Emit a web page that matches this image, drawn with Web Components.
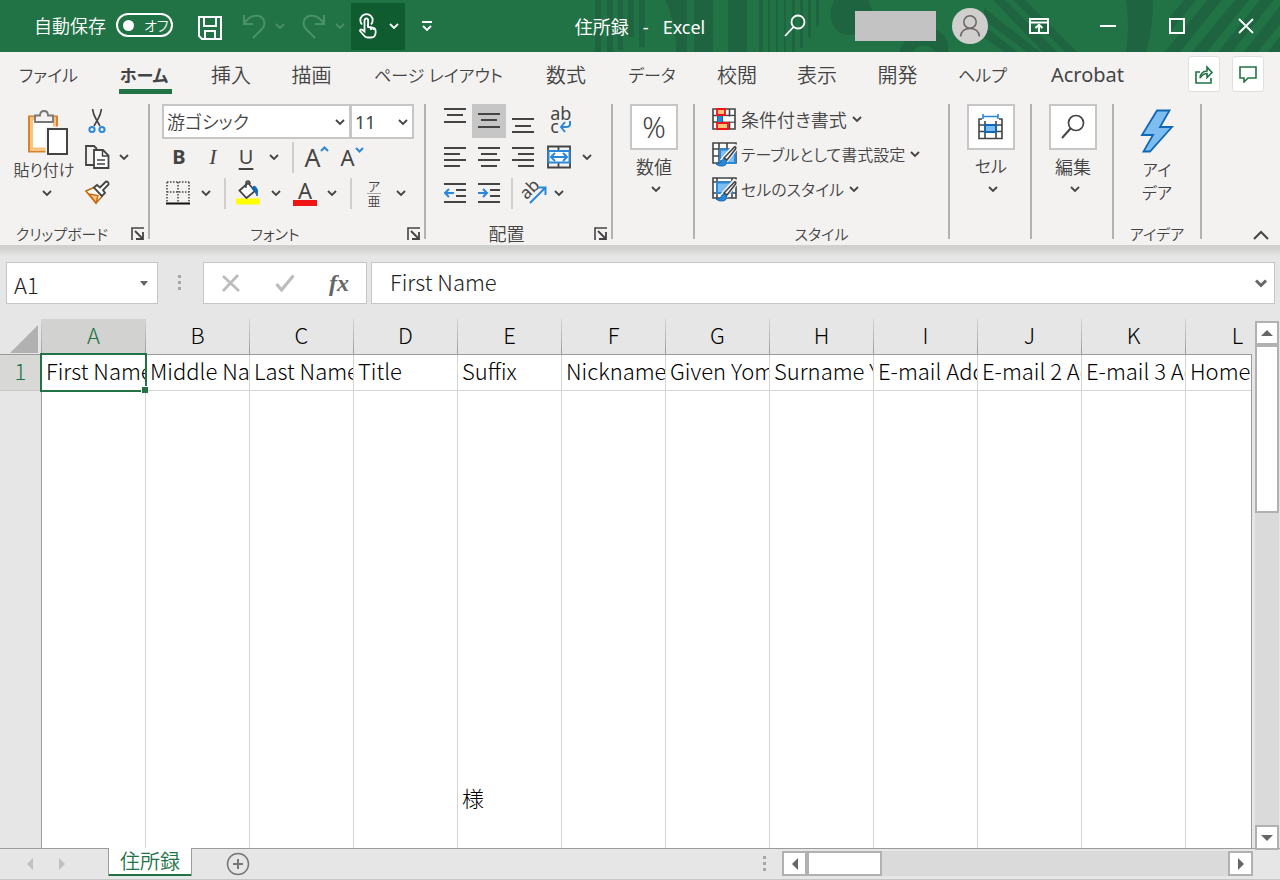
<!DOCTYPE html>
<html lang="ja">
<head>
<meta charset="utf-8">
<title>住所録 - Excel</title>
<style>
  html, body { margin: 0; height: 100%; }
  body {
    display: flex; flex-direction: column; min-height: 100vh; overflow: hidden;
    background: #e6e6e6; color: #444;
    font-family: "Noto Sans", "Noto Sans CJK JP", sans-serif; font-size: 18px; font-weight: 350;
    font-feature-settings: "palt";
    --green: #217346; --line: #9b9b9b; --sep: #b1b1b1; --ink: #444;
  }
  xl-sheet { flex: 1; min-height: 0; }
</style>
</head>
<body>
<xl-titlebar></xl-titlebar>
<xl-tabs></xl-tabs>
<xl-ribbon>
  <xl-group label="クリップボード" launcher style="--w:150px">
    <div slot="body" class="clip">
      <xl-tall icon="paste" label="貼り付け"></xl-tall>
      <xl-row>
        <xl-cmd icon="cut" label="切り取り" style="--w:30px"></xl-cmd>
      </xl-row>
      <xl-row>
        <xl-cmd icon="copy" label="コピー" style="--w:30px"></xl-cmd><xl-cmd icon="chev" label="コピーのオプション" style="--w:24px"></xl-cmd>
      </xl-row>
      <xl-row>
        <xl-cmd icon="brush" label="書式のコピー" style="--w:30px"></xl-cmd>
      </xl-row>
    </div>
  </xl-group>
  <xl-group label="フォント" launcher style="--w:276px;--pad:12px">
    <xl-row slot="body">
      <xl-combo value="游ゴシック" label="フォント名" style="--w:189px"></xl-combo><xl-combo value="11" label="フォント サイズ" style="--w:64px"></xl-combo>
    </xl-row>
    <xl-row slot="body">
      <xl-cmd icon="bold" label="太字" style="--w:34px"></xl-cmd>
      <xl-cmd icon="italic" label="斜体" style="--w:34px"></xl-cmd>
      <xl-cmd icon="underline" label="下線" style="--w:32px"></xl-cmd>
      <xl-cmd icon="chev" label="下線の種類" style="--w:24px"></xl-cmd>
      <xl-sep style="--w:14px"></xl-sep>
      <xl-cmd icon="grow" label="フォント サイズの拡大" style="--w:34px"></xl-cmd>
      <xl-cmd icon="shrink" label="フォント サイズの縮小" style="--w:36px"></xl-cmd>
    </xl-row>
    <xl-row slot="body">
      <xl-cmd icon="borders" label="罫線" style="--w:32px"></xl-cmd>
      <xl-cmd icon="chev" label="罫線の種類" style="--w:24px"></xl-cmd>
      <xl-sep style="--w:14px"></xl-sep>
      <xl-cmd icon="fill" label="塗りつぶしの色" style="--w:32px"></xl-cmd>
      <xl-cmd icon="chev" label="色の選択" style="--w:24px"></xl-cmd>
      <xl-cmd icon="fontcolor" label="フォントの色" style="--w:34px"></xl-cmd>
      <xl-cmd icon="chev" label="文字色の選択" style="--w:20px"></xl-cmd>
      <xl-sep style="--w:18px"></xl-sep>
      <xl-cmd icon="ruby" label="ふりがな" style="--w:28px"></xl-cmd>
      <xl-cmd icon="chev" label="ふりがなの設定" style="--w:26px"></xl-cmd>
    </xl-row>
  </xl-group>
  <xl-group label="配置" launcher style="--w:187px;--pad:12px">
    <xl-row slot="body">
      <xl-cmd icon="vtop" label="上揃え" style="--w:34px"></xl-cmd>
      <xl-cmd icon="vmid" label="上下中央揃え" pressed style="--w:34px"></xl-cmd>
      <xl-cmd icon="vbot" label="下揃え" style="--w:34px"></xl-cmd>
      <xl-cmd icon="wrap" label="折り返して全体を表示" style="--w:42px"></xl-cmd>
    </xl-row>
    <xl-row slot="body">
      <xl-cmd icon="left" label="左揃え" style="--w:34px"></xl-cmd>
      <xl-cmd icon="center" label="中央揃え" style="--w:34px"></xl-cmd>
      <xl-cmd icon="right" label="右揃え" style="--w:34px"></xl-cmd>
      <xl-cmd icon="merge" label="セルを結合して中央揃え" style="--w:38px"></xl-cmd>
      <xl-cmd icon="chev" label="結合のオプション" style="--w:18px"></xl-cmd>
    </xl-row>
    <xl-row slot="body">
      <xl-cmd icon="outdent" label="インデントを減らす" style="--w:34px"></xl-cmd>
      <xl-cmd icon="indent" label="インデントを増やす" style="--w:34px"></xl-cmd>
      <xl-sep style="--w:12px"></xl-sep>
      <xl-cmd icon="orient" label="方向" style="--w:32px"></xl-cmd>
      <xl-cmd icon="chev" label="方向の設定" style="--w:18px"></xl-cmd>
    </xl-row>
  </xl-group>
  <xl-group style="--w:82px"><xl-box slot="body" icon="percent" label="数値"></xl-box></xl-group>
  <xl-group label="スタイル" style="--w:255px;--pad:17px">
    <xl-line slot="body" icon="condfmt" label="条件付き書式"></xl-line>
    <xl-line slot="body" icon="tablefmt" label="テーブルとして書式設定"></xl-line>
    <xl-line slot="body" icon="cellstyle" label="セルのスタイル"></xl-line>
  </xl-group>
  <xl-group style="--w:82px"><xl-box slot="body" icon="cells" label="セル"></xl-box></xl-group>
  <xl-group style="--w:82px"><xl-box slot="body" icon="find" label="編集"></xl-box></xl-group>
  <xl-group label="アイデア" style="--w:88px"><xl-idea slot="body"></xl-idea></xl-group>
</xl-ribbon>
<xl-formula></xl-formula>
<xl-sheet></xl-sheet>
<xl-footer></xl-footer>

<script>
const S = (w, h, body) => `<svg width="${w}" height="${h}" viewBox="0 0 ${w} ${h}" fill="none" stroke="#444" stroke-width="2" aria-hidden="true">${body}</svg>`;
const bars = (rows) => rows.map(([x1, x2, y]) => `<path d="M${x1} ${y}H${x2}"/>`).join('');
const A = 'stroke="#2b88d8"';
const brushOver = `<path d="M22 4.500q3-1 1.500 2.500L14 19l-3-2z" fill="#f3f2f1" stroke="#f3f2f1" stroke-width="4"/><path d="M22.500 5q2-.5 1 2L15 18l-3-2z" fill="#fff" stroke-width="1.600"/><path d="M4 22q5 0 5.500-3.500 2-3 5 0 1 5-4 5.500-4 .5-6.500-2z" fill="#2b88d8" stroke="#1068b5" stroke-width="1"/>`;
const ICONS = {
  chev: S(10, 7, '<path d="M1 1l4 4 4-4" stroke-width="1.800" stroke="currentColor"/>'),
  up: S(16, 10, '<path d="M1 9l7-7 7 7"/>'),
  save: S(26, 26, '<g stroke="#fff"><path d="M2 2h22v22H5l-3-3z"/><path d="M7 2v9h12V2M8 24v-8h10v8"/></g>'),
  undo: S(24, 26, '<g stroke="#4a9069"><path d="M2 2v9h9M2 11C6 4 12 2 17 3c6 2 7 9 3 13l-9 9"/></g>'),
  redo: S(24, 26, '<g stroke="#4a9069"><path d="M22 2v9h-9M22 11C18 4 12 2 7 3 1 5 0 12 4 16l9 9"/></g>'),
  touch: S(20, 26, '<g stroke="#fff" stroke-width="1.800"><path d="M4 11.500A6.200 6.200 0 1 1 13 11.500" /><path d="M6.500 16V7.500q0-2 1.800-2t1.800 2V14q5 .2 7 2 .8 1 .5 4-.4 4.500-4.500 4.500H9.500q-2 0-3.500-2L2 18q0-2.500 2.500-1l2 1.500z"/><path d="M10 14v-3M13 17v-3M15.500 17v-2"/></g>'),
  custom: S(12, 12, '<g stroke="#fff" stroke-width="1.800"><path d="M1 2h10M2 6l4 4 4-4"/></g>'),
  search: S(22, 24, '<g stroke="#fff" stroke-width="1.800"><circle cx="14" cy="8" r="6.500"/><path d="M9.500 13L1 22"/></g>'),
  person: S(36, 36, '<circle cx="18" cy="18" r="18" fill="#d0cfce" stroke="none"/><g stroke="#666" stroke-width="1.500"><circle cx="18" cy="14" r="6.200"/><path d="M8.500 28.500q1-8 9.500-8t9.500 8"/></g>'),
  ribbonopt: S(20, 16, '<g stroke="#fff"><path d="M1 1h18v14H1zM1 4.500h18"/><path d="M10 14V7M6.500 10L10 6.800l3.500 3.200"/></g>'),
  min: S(16, 4, '<path d="M0 2h16" stroke="#fff"/>'),
  max: S(16, 16, '<path d="M1 1h14v14H1z" stroke="#fff"/>'),
  close: S(16, 16, '<path d="M1 1l14 14M15 1L1 15" stroke="#fff" stroke-width="1.800"/>'),
  share: S(20, 20, '<g stroke="#217346" stroke-width="1.600"><path d="M6 8H2v11h15v-5"/><path d="M6 14q1-7 7-7V3l5 5.500-5 5v-4q-4 0-7 4.500z"/></g>'),
  comment: S(18, 18, '<path d="M1 2h16v11H9l-4 4v-4H1z" stroke="#217346" stroke-width="1.600"/>'),
  paste: S(44, 48, '<path d="M3 7.500h28v35H3z" fill="#fff" stroke="#d9822b"/><path d="M5.500 10h23v30h-23z" stroke="#f8c47d" stroke-width="3"/><path d="M9 13V6.500h5q0-4.500 4-4.500t4 4.500h5V13z" fill="#f3f2f1" stroke="#777" stroke-width="1.800"/><path d="M21.500 19.500h20v26h-20z" fill="#fff" stroke="#f3f2f1" stroke-width="4"/><path d="M22 20h19v25H22z" fill="#fff"/>'),
  cut: S(18, 26, '<path d="M4.500 1q1 6 3.500 10l4 7M13.500 1q-1 6-3.500 10l-4 7" stroke-width="1.600"/><g stroke="#2b88d8" stroke-width="2"><circle cx="4" cy="21.500" r="2.600"/><circle cx="14" cy="21.500" r="2.600"/></g>'),
  copy: S(26, 26, '<path d="M10 21H2V2h8l3 3" stroke-width="1.800"/><path d="M10 6h9l5.500 5.500V24H10z" fill="#fff" stroke-width="1.800"/><path d="M18.500 6v6H24M13 16h8M13 20h8" stroke-width="1.500"/>'),
  brush: S(26, 26, '<path d="M2 11l8-3.500 8 9L12 23z" fill="#fff" stroke="#c96a11" stroke-width="1.600"/><path d="M5 14l9 1.500L12 23z" fill="#f8c47d" stroke="#c96a11" stroke-width="1.400"/><path d="M10 7.500l3-2.500 3 2.500L22 1.500q3 0 2.500 3L19 10l2 3-3 3z" fill="#fff" stroke-width="1.800"/>'),
  bold: '<b class="g b">B</b>', italic: '<i class="g it">I</i>', underline: '<u class="g">U</u>',
  grow: `<span class="g big">A</span>${S(9, 22, `<path d="M1 5l3.500-3.500L8 5" ${A}/>`)}`,
  shrink: `<span class="g mid">A</span>${S(9, 20, `<path d="M1 1l3.500 3.500L8 1" ${A}/>`)}`,
  borders: S(24, 24, '<path d="M1 1h22M1 1v20M23 1v20M12 1v20M1 11h22" stroke-width="1.500" stroke-dasharray="1.500 1.500"/><path d="M0 22.500h24" stroke="#111"/>'),
  fill: S(26, 26, '<path d="M1 21.500h24" stroke="#ff0" stroke-width="6"/><path d="M4.500 10.500L13 3l7 8-8.500 7z" fill="#fff" stroke-width="1.800"/><path d="M11 8V3q0-2 2-2t2 3" stroke-width="1.500"/><path d="M19 6q5 2 3 10-1-5-5-7z" fill="#1068b5" stroke="#1068b5" stroke-width="1"/>'),
  fontcolor: `<span class="stack"><span class="g mid">A</span><span class="bar"></span></span>`,
  ruby: '<span class="ruby"><span>ア</span><span>亜</span></span>',
  vtop: S(22, 28, bars([[0, 22, 2], [3, 19, 8], [0, 22, 15]])),
  vmid: S(22, 28, bars([[0, 22, 7], [3, 19, 13], [0, 22, 20]])),
  vbot: S(22, 28, bars([[0, 22, 12], [3, 19, 19], [0, 22, 25]])),
  left: S(22, 22, bars([[0, 22, 2], [0, 16, 8], [0, 22, 14], [0, 16, 20]])),
  center: S(22, 22, bars([[0, 22, 2], [3, 19, 8], [0, 22, 14], [3, 19, 20]])),
  right: S(22, 22, bars([[0, 22, 2], [6, 22, 8], [0, 22, 14], [6, 22, 20]])),
  outdent: S(22, 22, bars([[0, 22, 2], [12, 22, 8], [12, 22, 14], [0, 22, 20]]) + `<path d="M10 11H1M5 7l-4 4 4 4" ${A}/>`),
  indent: S(22, 22, bars([[0, 22, 2], [12, 22, 8], [12, 22, 14], [0, 22, 20]]) + `<path d="M0 11h9M5 7l4 4-4 4" ${A}/>`),
  wrap: `<span class="wrap"><span>ab</span><span>c${S(13, 13, `<path d="M11 1v3q0 3-4 3H2M6 2L2 7l4 5" ${A}/>`)}</span></span>`,
  merge: S(24, 24, `<path d="M1 1.500h22v21H1zM11.500 1v22" stroke-width="1.800"/><path d="M1.500 6h21v11.500h-21z" fill="#fff" ${A}/><path d="M4 12h16M8 8l-4 4 4 4M16 8l4 4-4 4" ${A}/>`),
  orient: `<span class="orient"><span>ab</span>${S(18, 18, `<path d="M1 17L16 2M9 1.500h7.500V9" ${A}/>`)}</span>`,
  percent: '<span class="pct">%</span>',
  condfmt: S(24, 24, '<path d="M1 2h22v20H1zM6 2v20M17.500 2v20M1 8.500h22M1 15h22" fill="#fff" stroke-width="1.600"/><path d="M5.500 8h5v7.500h-5z" fill="#2b88d8" stroke="#1068b5" stroke-width="1"/><path d="M11.500 9.500H22v5H11.500z" fill="#fff" stroke="none"/><path d="M5 2h8v6H5zM5 16h11v6H5z" fill="#f8c47d" stroke="#f01414" stroke-width="1.800"/>'),
  tablefmt: S(26, 26, `<path d="M1 1h23v20H1zM7 1v20M15 1v7M1 7h23M1 14h7" fill="#fff" stroke-width="1.600"/><path d="M8 7.500h15V21H8z" fill="#7dbdf0" stroke="#2b88d8"/>${brushOver}`),
  cellstyle: S(26, 26, `<path d="M1 1h23v20H1zM5 1v20M20 1v20M1 5h23M1 16h23" fill="#fff" stroke-width="1.600"/><path d="M5 5.500h15V16H5z" fill="#7dbdf0" stroke="#2b88d8"/>${brushOver}`),
  cells: S(26, 26, '<path d="M1 4.500v20h23v-20M1 11h23M1 17.500h23M7 7v17M18 7v17M1 5h3M21 5h3" fill="none" stroke-width="1.600"/><path d="M7 11h11v7H7z" fill="#7dbdf0" stroke="#1068b5"/><path d="M5 2.500h15M5 0v5M20 0v5" stroke="#2b88d8" stroke-width="1.600"/>'),
  find: S(26, 26, '<circle cx="16" cy="9" r="7.500" fill="#fff" stroke-width="1.700"/><path d="M10.500 14.500L2 24"/>'),
  bolt: S(34, 44, '<path d="M17 1.500h12.500L20 18h12L10 42.500H3.500L13 26H2z" fill="#7dbdf0" stroke="#1068b5" stroke-width="1.800"/>'),
  launch: S(13, 13, '<path d="M1 13V1h12" stroke-width="1.600"/><path d="M4 4l7 7M12 5v7H5" stroke-width="1.800"/>'),
  tri: S(8, 5, '<path d="M0 0h8L4 5z" fill="#666" stroke="none"/>'),
  x: S(18, 18, '<path d="M1 2l16 15M16 1L1 17" stroke="#bcbcbc" stroke-width="2.600"/>'),
  check: S(20, 18, '<path d="M1.500 10l5 6L18.500 1.500" stroke="#bcbcbc" stroke-width="3.200"/>'),
  fchev: S(12, 9, '<path d="M1 1.500l5 5 5-5" stroke="#666" stroke-width="3"/>'),
  dots: S(4, 16, '<g fill="#a6a6a6" stroke="none"><path d="M0 0h3v3H0zM0 6h3v3H0zM0 12h3v3H0z"/></g>'),
  plus: S(24, 24, '<circle cx="12" cy="12" r="10.500" stroke="#777" stroke-width="1.500"/><path d="M12 7v10M7 12h10" stroke="#777"/>'),
  corner: S(28, 28, '<path d="M28 0v28H0z" fill="#b1b1b1" stroke="none"/>'),
  au: S(12, 6, '<path d="M6 0l6 6H0z" fill="#666" stroke="none"/>'),
  ad: S(12, 6, '<path d="M0 0h12L6 6z" fill="#666" stroke="none"/>'),
  al: S(6, 12, '<path d="M6 0v12L0 6z" fill="currentColor" stroke="none"/>'),
  ar: S(6, 12, '<path d="M0 0v12l6-6z" fill="currentColor" stroke="none"/>'),
};
const BASE = `<style>
  :host { box-sizing: border-box; display: block; }
  *, *::before { box-sizing: border-box; }
  svg { display: block; flex: none; }
  button { font: inherit; color: inherit; background: none; border: 0; padding: 0; margin: 0;
    font-feature-settings: inherit; display: flex; align-items: center; justify-content: center; }
</style>`;
const define = (name, css, html) => customElements.define(name, class extends HTMLElement {
  connectedCallback() {
    if (this.shadowRoot) return;
    const t = document.createElement('template');
    t.innerHTML = `${BASE}<style>${css}</style>${typeof html === 'function' ? html(this) : html}`;
    this.attachShadow({ mode: 'open' }).append(t.content.cloneNode(true));
  }
});
const at = (el, n) => el.getAttribute(n) || '';
const isKana = (s) => /^[ァ-ヶー\s]+$/.test(s);
const isLatin = (s) => /^[\x20-\x7e]+$/.test(s);

define('xl-titlebar', `
  :host { position: relative; display: grid; grid-template-columns: 1fr auto 1fr; align-items: center;
    height: 52px; flex: none; background: var(--green); color: #fff; overflow: hidden; }
  .art { position: absolute; right: 0; top: 0; }
  .side { position: relative; display: flex; align-items: center; height: 100%; min-width: 0; }
  .side.r { justify-content: flex-end; }
  .auto { display: flex; align-items: center; gap: 10px; margin-left: 34px; padding-bottom: 2px; }
  .toggle { display: flex; align-items: center; justify-content: flex-start; width: 57px; height: 24px; padding-left: 5px;
    gap: 10px; border: 2px solid #fff; border-radius: 12px; font-size: 14px; }
  .toggle::before { content: ""; width: 11px; height: 11px; border-radius: 50%; background: #fff; }
  .save { margin: 3px 0 0 24px; } .undo { margin-left: 19px; }
  .dim { color: #4a9069; width: 28px; } .redo { margin-left: 8px; }
  .touch { width: 54px; height: 47px; gap: 11px; background: #0e5c2f; margin-left: -3px; }
  .custom { margin-left: 16px; }
  h1 { position: relative; margin: 0; font-size: 18px; font-weight: 400; white-space: pre; }
  .account { width: 81px; height: 30px; background: #c3c3c3; margin: 0 16px 0 49px; }
  .win { width: 69px; height: 52px; } .person { margin-right: 16px; }`,
  `<svg class="art" width="700" height="52" viewBox="0 0 700 52" fill="#1f6440" aria-hidden="true">
    <path d="M15 0h6v52h-6zM27 0h6v52h-6zM38 0h5v50h-5zM48 0h6v37h-6zM59 0h6v47h-6zM85 0h22v52H96q1-28-11-52zM114 0h19v52h-19zM148 0h19v52h-19zM179 0h4v52h-4zM188 0h2v52h-2zM196 0h2v52h-2zM204 0h2v52h-2zM212 0h3v52h-3zM220 0h3v48h-3zM228 0h3v38h-3zM236 0h3v26h-3z"/>
    <path d="M254 0h34q7 12 2 22-8 13-21 13-14-1-18-15-2-10 3-20z"/>
    <circle cx="344" cy="58" r="19" fill="none" stroke="#1f6440" stroke-width="13"/>
    <path d="M350 28q20 4 18 24h-8q0-14-10-18z"/>
    <path d="M404 8l56 44h-13L404 20zM404 26l34 26h-13L404 38zM413 0h12l52 52h-14zM433 0h12l52 52h-12zM546 0h27q0 30-7 52h-20q4-26 0-52z"/>
    <path d="M627 0h15l-42 52h-15zM655 0h14l-42 52h-15zM680 0h14l-42 52h-14zM700 6v18l-22 28h-14zM700 36v16h-12zM604 0h12l-26 32v-15z"/></svg>
  <div class="side"><label class="auto">自動保存 <button class="toggle" role="switch" aria-checked="false">オフ</button></label>
    <button class="save" aria-label="上書き保存">${ICONS.save}</button>
    <button class="undo" aria-label="元に戻す">${ICONS.undo}</button><button class="dim" aria-label="履歴">${ICONS.chev}</button>
    <button class="redo" aria-label="やり直し">${ICONS.redo}</button><button class="dim" aria-label="履歴">${ICONS.chev}</button>
    <button class="touch" aria-label="タッチ モード">${ICONS.touch}${ICONS.chev}</button>
    <button class="custom" aria-label="カスタマイズ">${ICONS.custom}</button></div>
  <h1>住所録   -   Excel</h1>
  <div class="side r"><button aria-label="検索">${ICONS.search}</button><span class="account"></span>
    <button class="person" aria-label="アカウント">${ICONS.person}</button>
    <button class="win" aria-label="リボンの表示">${ICONS.ribbonopt}</button><button class="win" aria-label="最小化">${ICONS.min}</button>
    <button class="win" aria-label="最大化">${ICONS.max}</button><button class="win" aria-label="閉じる">${ICONS.close}</button></div>`);

const TABS = ['ファイル', 'ホーム', '挿入', '描画', 'ページ レイアウト', '数式', 'データ', '校閲', '表示', '開発', 'ヘルプ', 'Acrobat'];
define('xl-tabs', `
  :host { display: flex; justify-content: space-between; height: 46px; flex: none; background: #f3f2f1; font-size: 20px; }
  nav { display: grid; grid-template-columns: 97px 94px 80px 81px 173px 82px 90px 80px 80px 81px 89px 121px; }
  nav button { white-space: nowrap; position: relative; padding-bottom: 2px; }
  nav .kana { font-size: 17px; }
  nav .latin { font-weight: 400; }
  nav .on { font-weight: 700; }
  .on::after { content: ""; position: absolute; left: 22px; right: 19px; bottom: 4px; height: 5px; background: var(--green); }
  .r { display: flex; gap: 12px; padding: 4px 16px 6px 0; }
  .r button { width: 32px; background: #fff; border: 1px solid #e1dfdd; border-radius: 3px; }`,
  `<nav>${TABS.map((t) => `<button class="${isKana(t) ? 'kana' : ''} ${isLatin(t) ? 'latin' : ''} ${t === 'ホーム' ? 'on' : ''}">${t}</button>`).join('')}</nav>
  <div class="r"><button aria-label="共有">${ICONS.share}</button><button aria-label="コメント">${ICONS.comment}</button></div>`);

define('xl-ribbon', `
  :host { display: flex; flex: none; height: 147px; padding: 6px 0; background: #f3f2f1; }
  .fold { margin: auto 11px -1px auto; }`,
  `<slot></slot><button class="fold" aria-label="リボンを折りたたむ">${ICONS.up}</button>`);

define('xl-group', `
  :host { display: flex; flex-direction: column; flex: none; width: var(--w); height: 135px; border-right: 2px solid var(--sep); }
  .body { flex: none; height: 118px; padding-left: var(--pad, 0); display: flex; flex-direction: column; gap: 2px; }
  footer { display: flex; flex: none; align-items: center; height: 22px; font-size: 15px; }
  footer span { flex: 1; text-align: center; white-space: nowrap; }
  footer .kanji { font-size: 18px; }
  footer button { width: 24px; justify-content: flex-end; padding-right: 4px; }
  ::slotted(.clip) { display: grid; grid-template-columns: 82px 1fr; grid-template-rows: repeat(3, 34px); gap: 2px 0; }`,
  (el) => `<div class="body"><slot name="body"></slot></div>
    <footer><span class="${isKana(at(el, 'label')) ? '' : 'kanji'}">${at(el, 'label')}</span>${el.hasAttribute('launcher') ? `<button aria-label="${at(el, 'label')}の設定">${ICONS.launch}</button>` : ''}</footer>`);

define('xl-row', ':host { display: flex; height: 34px; flex: none; }', '<slot></slot>');
define('xl-sep', ':host { display: flex; width: var(--w); } span { width: 2px; height: 31px; margin: auto; background: #d0cfce; }', '<span></span>');

define('xl-cmd', `
  :host { display: flex; width: var(--w); height: 34px; }
  :host([pressed]) { background: #c6c6c6; }
  button { width: 100%; font-weight: 400; }
  .g { font-size: 20px; line-height: 24px; }
  .b { font-weight: 700; }
  .it { font-family: "Liberation Serif", serif; font-size: 22px; }
  u { text-underline-offset: 4px; text-decoration-thickness: 2px; }
  .big { font-size: 25px; } .mid { font-size: 22px; }
  .stack { display: flex; flex-direction: column; align-items: center; }
  .stack .g { line-height: 20px; }
  .bar { width: 24px; height: 6px; background: #f01414; }
  .ruby { display: flex; flex-direction: column; font: 350 13px/14px "Noto Sans CJK JP", sans-serif; }
  .ruby span + span { border-top: 1px solid #a6a6a6; }
  .wrap { display: flex; flex-direction: column; font-size: 18px; line-height: 13px; align-items: flex-start; padding-bottom: 3px; }
  .wrap span { display: flex; align-items: center; height: 13px; }
  .orient { position: relative; width: 26px; height: 26px; }
  .orient span { position: absolute; left: -2px; top: 0; font-size: 17px; line-height: 17px; transform: rotate(-45deg); }
  .orient svg { position: absolute; right: 0; bottom: 2px; }`,
  (el) => `<button aria-label="${at(el, 'label')}">${ICONS[at(el, 'icon')]}</button>`);

define('xl-combo', `
  :host { position: relative; width: var(--w); height: 35px; margin-right: -1px; }
  select { appearance: none; width: 100%; height: 100%; padding: 0 2px 0 3px; border: 2px solid #c6c6c6; border-radius: 0; background: #fff;
    color: var(--ink); font: inherit; font-feature-settings: inherit; }
  .latin { font-weight: 400; }
  svg { position: absolute; right: 6px; top: 15px; pointer-events: none; }`,
  (el) => `<select class="${isLatin(at(el, 'value')) ? 'latin' : ''}" aria-label="${at(el, 'label')}"><option>${at(el, 'value')}</option></select>${ICONS.chev}`);

define('xl-tall', `
  :host { grid-row: 1 / 4; }
  button { flex-direction: column; width: 88px; padding-top: 5px; font-size: 16px; line-height: 22px; }
  .t { margin: 2px 0 9px; } .i { margin-left: 8px; } .c { margin-left: 6px; }`,
  (el) => `<button><span class="i">${ICONS.paste}</span><span class="t">${at(el, 'label')}</span><span class="c">${ICONS.chev}</span></button>`);

define('xl-box', `
  :host { padding-left: 2px; }
  button { flex-direction: column; width: 100%; line-height: 22px; }
  .b { display: flex; align-items: center; justify-content: center; width: 48px; height: 46px; border: 2px solid #c6c6c6; background: #fff; }
  .t { margin: 6px 0 8px; } .kana { font-size: 17px; } .pct { font-size: 29px; font-weight: 300; } .c { margin-left: 4px; }`,
  (el) => `<button><span class="b">${ICONS[at(el, 'icon')]}</span><span class="t ${isKana(at(el, 'label')) ? 'kana' : ''}">${at(el, 'label')}</span><span class="c">${ICONS.chev}</span></button>`);

define('xl-line', `
  :host { height: 33px; }
  button { height: 30px; gap: 5px; } .i { width: 24px; height: 24px; } .kana { font-size: 16px; }`,
  (el) => { const l = at(el, 'label'); return `<button><span class="i">${ICONS[at(el, 'icon')]}</span><span class="${/[ァ-ヶ]/.test(l) ? 'kana' : ''}">${l}</span>${ICONS.chev}</button>`; });

define('xl-idea', `button { flex-direction: column; width: 100%; padding-top: 5px; font-size: 16px; line-height: 23px; } .t { margin-top: 6px; }`,
  `<button>${ICONS.bolt}<span class="t">アイ<br>デア</span></button>`);

define('xl-formula', `
  :host { display: flex; flex: none; height: 74px; padding: 17px 5px 15px 6px; background: linear-gradient(#d0d0ce 0 3px, #e6e6e6 11px);
    font-family: "Noto Sans CJK JP", sans-serif; font-weight: 300; font-size: 22px; font-feature-settings: normal; color: #222; }
  .box { display: flex; align-items: center; height: 42px; background: #fff; border: 1px solid #c6c6c6; }
  input { min-width: 0; flex: 1; height: 40px; border: 0; padding: 0 0 0 7px; background: none; font: inherit; color: inherit; }
  .name { width: 152px; padding-right: 9px; } .name input { padding-top: 2px; }
  .dots { width: 45px; padding-right: 2px; display: flex; align-items: center; justify-content: center; }
  .fx { width: 164px; } .fx button { flex: 1; } .fx i { font: italic 700 24px "Liberation Serif", serif; color: #666; }
  .text { flex: 1; margin-left: 4px; padding-right: 7px; } .text input { padding: 0 0 5px 18px; }`,
  `<div class="box name"><input aria-label="名前ボックス" value="A1">${ICONS.tri}</div><div class="dots">${ICONS.dots}</div>
  <div class="box fx"><button aria-label="キャンセル">${ICONS.x}</button><button aria-label="入力">${ICONS.check}</button><button aria-label="関数の挿入"><i>fx</i></button></div>
  <div class="box text"><input aria-label="数式バー" value="First Name"><button aria-label="展開">${ICONS.fchev}</button></div>`);

const COLS = 'ABCDEFGHIJKL'.split('');
const ROW = ['First Name', 'Middle Name', 'Last Name', 'Title', 'Suffix', 'Nickname', 'Given Yomi', 'Surname Yomi', 'E-mail Address', 'E-mail 2 Address', 'E-mail 3 Address', 'Home Street'];
define('xl-sheet', `
  :host { display: flex; font-family: "Noto Sans CJK JP", sans-serif; font-size: 22px; font-feature-settings: normal; color: #000; }
  .grid { position: relative; flex: 1; min-width: 0; overflow: hidden; }
  .grid::after { content: ""; position: absolute; right: 0; top: 35px; bottom: 0; width: 1px; background: var(--line); }
  table { table-layout: fixed; width: 1290px; height: 100%; border-collapse: separate; border-spacing: 0; line-height: 28px; }
  col { width: 104px; } col.h { width: 42px; }
  th, td { padding: 0 0 6px; font-weight: 300; overflow: hidden; white-space: nowrap; }
  thead th { height: 36px; border-bottom: 1px solid var(--line); border-right: 1px solid;
    border-image: linear-gradient(#d4d4d4, var(--line)) 1; background: #e6e6e6; }
  thead th:first-child { padding: 0; }
  thead th:first-child svg { margin: 4px 0 0 10px; }
  thead .sel { background: #d2d2d0; color: var(--green); }
  tbody th { border-right: 1px solid var(--line); background: #e6e6e6; }
  tbody tr.one th { background: #d8d8d6; color: var(--green); border-bottom: 1px solid #c6c6c6; height: 36px; }
  td { border-right: 1px solid #d4d4d4; padding-left: 4px; background: #fff; }
  tr.one td { border-bottom: 1px solid #d4d4d4; }
  tr.rest td { vertical-align: bottom; padding-bottom: 37px; }
  .cursor { position: absolute; left: 40px; top: 34px; width: 107px; height: 39px; border: 2px solid var(--green); z-index: 1; }
  .cursor::after { content: ""; position: absolute; right: -3px; bottom: -3px; width: 6px; height: 6px; background: var(--green); border: solid #fff; border-width: 1px 0 0 1px; box-sizing: content-box; }
  .scroll { display: flex; flex-direction: column; width: 28px; padding: 2px 1px 0 3px; }
  .scroll button, .thumb { background: #fff; border: 2px solid #b1b1b1; flex: none; }
  .scroll button { height: 24px; }
  .track { flex: 1; background: #dadada; } .thumb { height: 168px; }
  .scroll button:last-child { height: 25px; margin-bottom: -2px; z-index: 1; }`,
  `<div class="grid"><div class="cursor"></div><table><colgroup><col class="h">${COLS.map(() => '<col>').join('')}</colgroup>
    <thead><tr><th>${ICONS.corner}</th>${COLS.map((c, i) => `<th scope="col"${i ? '' : ' class="sel"'}>${c}</th>`).join('')}</tr></thead>
    <tbody><tr class="one"><th scope="row">1</th>${ROW.map((c) => `<td>${c}</td>`).join('')}</tr>
    <tr class="rest"><th></th>${COLS.map((c) => `<td>${c === 'E' ? '様' : ''}</td>`).join('')}</tr></tbody></table></div>
  <div class="scroll"><button aria-label="上へ">${ICONS.au}</button><div class="track"><div class="thumb"></div></div><button aria-label="下へ">${ICONS.ad}</button></div>`);

define('xl-footer', `
  :host { display: flex; flex: none; height: 32px; border-bottom: 1px solid #c6c6c6; padding-right: 27px;
    background: linear-gradient(var(--line) 0 1px, #e6e6e6 1px); }
  .nav { width: 26px; color: #c0c0c0; }
  .tabs { display: flex; flex: 1; }
  .lead { display: flex; width: 108px; padding-left: 17px; gap: 6px; }
  .tab { height: 28px; width: 84px; background: #fff; border: solid var(--line); border-width: 0 1px; font: 350 20px "Noto Sans CJK JP", sans-serif;
    color: var(--green); box-shadow: inset 0 -2px var(--green); padding-bottom: 4px; }
  .add { width: 24px; margin: 0 0 0 34px; }
  .scroll { display: flex; width: 471px; height: 25px; margin-top: 3px; background: #dadada; color: #666; }
  .scroll button, .thumb { background: #fff; border: 2px solid #b1b1b1; width: 25px; }
  .thumb { width: 75px; } .scroll button:last-child { margin-left: auto; }
  .dots { display: flex; align-items: center; width: 19px; }`,
  `<div class="tabs"><div class="lead"><button class="nav" aria-label="前のシート">${ICONS.al}</button><button class="nav" aria-label="次のシート">${ICONS.ar}</button></div>
    <button class="tab">住所録</button><button class="add" aria-label="新しいシート">${ICONS.plus}</button></div>
  <div class="dots">${ICONS.dots}</div><div class="scroll"><button aria-label="左へ">${ICONS.al}</button><div class="thumb"></div><button aria-label="右へ">${ICONS.ar}</button></div>`);
</script>
</body>
</html>
